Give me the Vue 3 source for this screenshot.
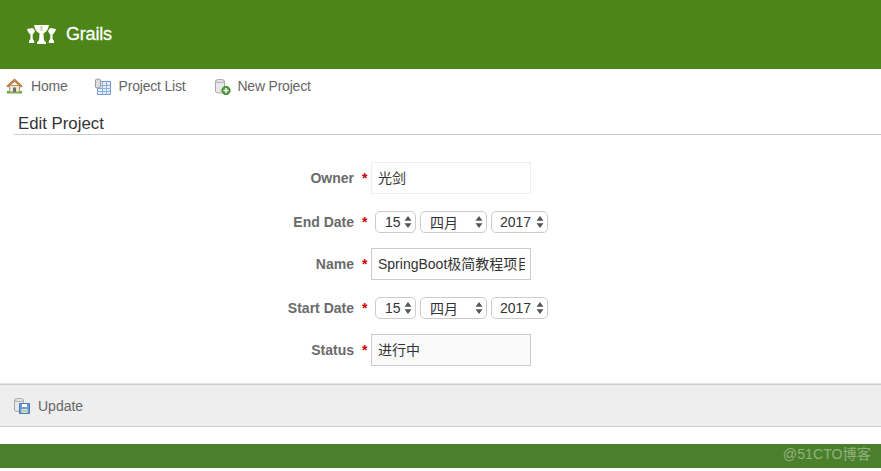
<script setup>
const rows = [
  { label: 'Owner', type: 'input', value: '光剑', cls: 'owner' },
  { label: 'End Date', type: 'date' },
  { label: 'Name', type: 'input', value: 'SpringBoot极简教程项目', cls: 'name' },
  { label: 'Start Date', type: 'date' },
  { label: 'Status', type: 'input', value: '进行中', cls: 'status' }
]
const selects = [
  { text: '15', cls: 'day' },
  { text: '四月', cls: 'month' },
  { text: '2017', cls: 'year' }
]
</script>

<template>
  <div class="page">
    <header class="header">
      <svg class="logo" width="29" height="19" viewBox="0 0 29 19">
        <path fill="#fff" d="M7 0H22L21 3.500C20 6 18.500 7.500 16.500 8.300L16.800 14C17 15.500 18 16.500 19 17.200V19H10V17.200C11 16.500 12 15.500 12.200 14L12.500 8.300C10.500 7.500 9 6 8 3.500z" />
        <path fill="#fff" d="M0 4L6 3 8 6C7 8 6.500 9 5.600 9.500L5.800 14 7.200 16V18H2V16L3.400 14 3.500 9.500C1.800 8.500.5 6.500 0 4z" />
        <path fill="#fff" d="M29 4L23 3 21 6C22 8 22.500 9 23.400 9.500L23.200 14 21.800 16V18H27V16L25.600 14 25.500 9.500C27.200 8.500 28.500 6.500 29 4z" />
        <path fill="#bcd3a4" d="M13.500 1h2v5h-2z" />
      </svg>
      <span class="brand">Grails</span>
    </header>

    <nav class="nav">
      <a class="nav-item home">
        <svg width="17" height="16" viewBox="0 0 17 16">
          <path fill="#5fae3e" d="M1 13h15v2.500H1z" />
          <path fill="#efe6d2" stroke="#b89a70" d="M3.500 7.500h10V14h-10z" />
          <path fill="#707070" d="M7 9.500h3V14H7z" />
          <path fill="#d08a45" stroke="#a56c33" stroke-width=".8" d="M.8 8L8.500 1l7.700 7-1.300 1-6.400-5.600L2.100 9z" />
        </svg>
        <span>Home</span>
      </a>
      <a class="nav-item list">
        <svg width="17" height="17" viewBox="0 0 17 17">
          <path fill="#e6eef9" stroke="#6f9bd6" d="M3.500 3.500h13v13h-13z" />
          <path stroke="#8fb0de" fill="none" d="M3.500 7.500h13M3.500 10.500h13M3.500 13.500h13M8.500 3.500v13M12.500 3.500v13" />
          <path fill="#dcdcdc" stroke="#9a9a9a" d="M1.500 1.800C1.500.9 6.500.9 6.500 1.800v7.400c0 .9-5 .9-5 0z" />
        </svg>
        <span>Project List</span>
      </a>
      <a class="nav-item create">
        <svg width="17" height="17" viewBox="0 0 17 17">
          <path fill="#e8e8e8" stroke="#a8a8a8" d="M1.500 3c0-2 9-2 9 0v10.500c0 2-9 2-9 0z" />
          <path fill="none" stroke="#a8a8a8" d="M1.500 3c0 2 9 2 9 0" />
          <circle cx="12" cy="12.500" r="4.200" fill="#4f9a3c" stroke="#2e7a28" stroke-width=".7" />
          <path stroke="#fff" stroke-width="1.500" d="M12 10v5M9.500 12.500h5" />
        </svg>
        <span>New Project</span>
      </a>
    </nav>

    <h1 class="title">Edit Project</h1>

    <form class="form">
      <div v-for="row in rows" :key="row.label" class="row" :class="row.type">
        <label class="label">{{ row.label }}</label>
        <span class="star">*</span>
        <input v-if="row.type === 'input'" class="field" :class="row.cls" :value="row.value" readonly />
        <div v-else class="selects">
          <div v-for="s in selects" :key="s.cls" class="select" :class="s.cls">
            <span>{{ s.text }}</span>
            <svg class="updown" width="8" height="14" viewBox="0 0 8 14">
              <path fill="#555" d="M4 1l3.500 4.700H.5zM4 13L.5 8.300h7z" />
            </svg>
          </div>
        </div>
      </div>
    </form>

    <div class="buttons">
      <a class="update">
        <svg width="17" height="17" viewBox="0 0 17 17">
          <path fill="#e8e8e8" stroke="#a8a8a8" d="M1.500 3c0-2 9-2 9 0v10c0 2-9 2-9 0z" />
          <path fill="none" stroke="#a8a8a8" d="M1.500 3c0 2 9 2 9 0" />
          <path fill="#6c9ade" stroke="#4a78bd" d="M6.500 6.500h10v10h-10z" />
          <path fill="#fff" d="M9 7h5v3H9z" />
          <path fill="#cfe3c0" d="M8.500 12h6v4h-6z" />
          <path fill="#8fc46e" d="M9.500 13.500h4v1h-4z" />
        </svg>
        <span>Update</span>
      </a>
    </div>

    <footer class="footer"><span class="mark">@51CTO博客</span></footer>
  </div>
</template>

<style scoped>
.page {
  width: 881px;
  height: 471px;
  overflow: hidden;
  background: #fff;
  font-family: "Liberation Sans", "Noto Sans CJK SC", sans-serif;
  font-size: 14px;
  color: #666;
}
.header {
  height: 69px;
  background: #4d8618;
  display: flex;
  align-items: center;
  padding-left: 27px;
  box-sizing: border-box;
}
.brand {
  margin-left: 10px;
  margin-top: -1px;
  color: #fff;
  font-size: 18px;
  font-weight: 400;
  letter-spacing: -0.2px;
  -webkit-text-stroke: 0.3px #fff;
}
.nav {
  height: 34px;
  display: flex;
  align-items: center;
  letter-spacing: -0.2px;
}
.nav-item {
  display: flex;
  align-items: center;
}
.nav-item svg {
  flex: none;
}
.home {
  margin-left: 6px;
}
.home span {
  margin-left: 8px;
}
.list {
  margin-left: 26px;
}
.list span {
  margin-left: 8px;
}
.create {
  margin-left: 29px;
}
.create span {
  margin-left: 6px;
}
.title {
  margin: 0 0 0 14px;
  height: 32px;
  box-sizing: border-box;
  padding: 11px 0 0 4px;
  border-bottom: 1px solid #ccc;
  font-size: 16.800px;
  line-height: 20px;
  font-weight: 400;
  color: #333;
}
.form {
  padding-top: 27px;
}
.row {
  display: flex;
  align-items: center;
  height: 32px;
}
.row.date {
  height: 22px;
  margin: 17px 0 15px;
}
.label {
  width: 354px;
  text-align: right;
  font-weight: 700;
  color: #6b6b6b;
}
.star {
  width: 17px;
  padding-left: 8px;
  box-sizing: border-box;
  color: #c00;
  font-weight: 700;
}
.field {
  width: 160px;
  height: 32px;
  box-sizing: border-box;
  padding: 0 5px 2px 6px;
  border: 1px solid #ccc;
  border-radius: 0;
  outline: none;
  background: #fff;
  color: #333;
  font: inherit;
}
.field.owner {
  border-color: #eee;
}
.field.status {
  background: #fafafa;
}
.selects {
  display: flex;
  margin-left: 4px;
  gap: 4px;
}
.select {
  height: 22px;
  box-sizing: border-box;
  display: flex;
  align-items: center;
  justify-content: space-between;
  border: 1px solid #ccc;
  border-radius: 5px;
  background: #fff;
  color: #333;
  padding-right: 3px;
}
.day {
  width: 41px;
  padding-left: 9px;
}
.month {
  width: 67px;
  padding-left: 9px;
}
.year {
  width: 57px;
  padding-left: 8px;
}
.buttons {
  margin-top: 18px;
  height: 43px;
  box-sizing: border-box;
  display: flex;
  align-items: center;
  padding-left: 13px;
  background: #eee;
  border-top: 1px solid #ccc;
  border-bottom: 1px solid #ccc;
  box-shadow: 0 -1px 1px #e6e6e6;
}
.update {
  display: flex;
  align-items: center;
}
.update span {
  margin-left: 8px;
}
.footer {
  margin-top: 17px;
  height: 24px;
  box-sizing: border-box;
  padding: 0 10px 6px 0;
  background: #4a7f2b;
  display: flex;
  align-items: center;
  justify-content: flex-end;
}
.mark {
  font-size: 14.200px;
  color: rgba(255, 255, 255, 0.4);
}
</style>

<style>
html, body {
  margin: 0;
  background: #fff;
}
</style>
